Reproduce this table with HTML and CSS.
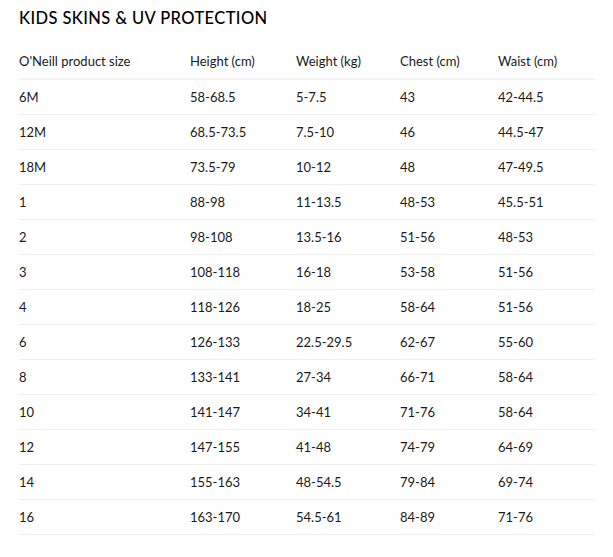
FILE: index.html
```html
<!DOCTYPE html>
<html>
<head>
<meta charset="utf-8">
<link rel="stylesheet" href="styles.css">
</head>
<body>
<div class="page">
  <h2 class="title">KIDS SKINS &amp; UV PROTECTION</h2>
  <table class="sizes">
    <thead>
      <tr><th class="c1">O'Neill product size</th><th class="c2">Height (cm)</th><th class="c3">Weight (kg)</th><th class="c4">Chest (cm)</th><th>Waist (cm)</th></tr>
    </thead>
    <tbody>
      <tr><td>6M</td><td>58-68.5</td><td>5-7.5</td><td>43</td><td>42-44.5</td></tr>
      <tr><td>12M</td><td>68.5-73.5</td><td>7.5-10</td><td>46</td><td>44.5-47</td></tr>
      <tr><td>18M</td><td>73.5-79</td><td>10-12</td><td>48</td><td>47-49.5</td></tr>
      <tr><td>1</td><td>88-98</td><td>11-13.5</td><td>48-53</td><td>45.5-51</td></tr>
      <tr><td>2</td><td>98-108</td><td>13.5-16</td><td>51-56</td><td>48-53</td></tr>
      <tr><td>3</td><td>108-118</td><td>16-18</td><td>53-58</td><td>51-56</td></tr>
      <tr><td>4</td><td>118-126</td><td>18-25</td><td>58-64</td><td>51-56</td></tr>
      <tr><td>6</td><td>126-133</td><td>22.5-29.5</td><td>62-67</td><td>55-60</td></tr>
      <tr><td>8</td><td>133-141</td><td>27-34</td><td>66-71</td><td>58-64</td></tr>
      <tr><td>10</td><td>141-147</td><td>34-41</td><td>71-76</td><td>58-64</td></tr>
      <tr><td>12</td><td>147-155</td><td>41-48</td><td>74-79</td><td>64-69</td></tr>
      <tr><td>14</td><td>155-163</td><td>48-54.5</td><td>79-84</td><td>69-74</td></tr>
      <tr><td>16</td><td>163-170</td><td>54.5-61</td><td>84-89</td><td>71-76</td></tr>
    </tbody>
  </table>
</div>
</body>
</html>
```
FILE: styles.css
```css
html, body {
  margin: 0;
  padding: 0;
  background: #fff;
}
.page {
  padding: 8px 18px 0 19px;
  font-family: Lato, "Open Sans", sans-serif;
  color: #1a1a1a;
}
.title {
  margin: 0;
  font-size: 16.5px;
  font-weight: 500;
  letter-spacing: 0.4px;
  line-height: 20px;
  color: #000;
}
.sizes {
  margin-top: 16px;
  width: 576px;
  border-collapse: collapse;
  font-size: 13px;
}
.sizes th, .sizes td {
  text-align: left;
  font-weight: 400;
  padding: 0;
  height: 34px;
  border-bottom: 1px solid #f0f0f0;
  vertical-align: middle;
}
.sizes th {
  height: 34px;
  border-bottom: 2px solid #f2f2f2;
}
.c1 { width: 171px; }
.c2 { width: 106px; }
.c3 { width: 104px; }
.c4 { width: 98px; }
```
